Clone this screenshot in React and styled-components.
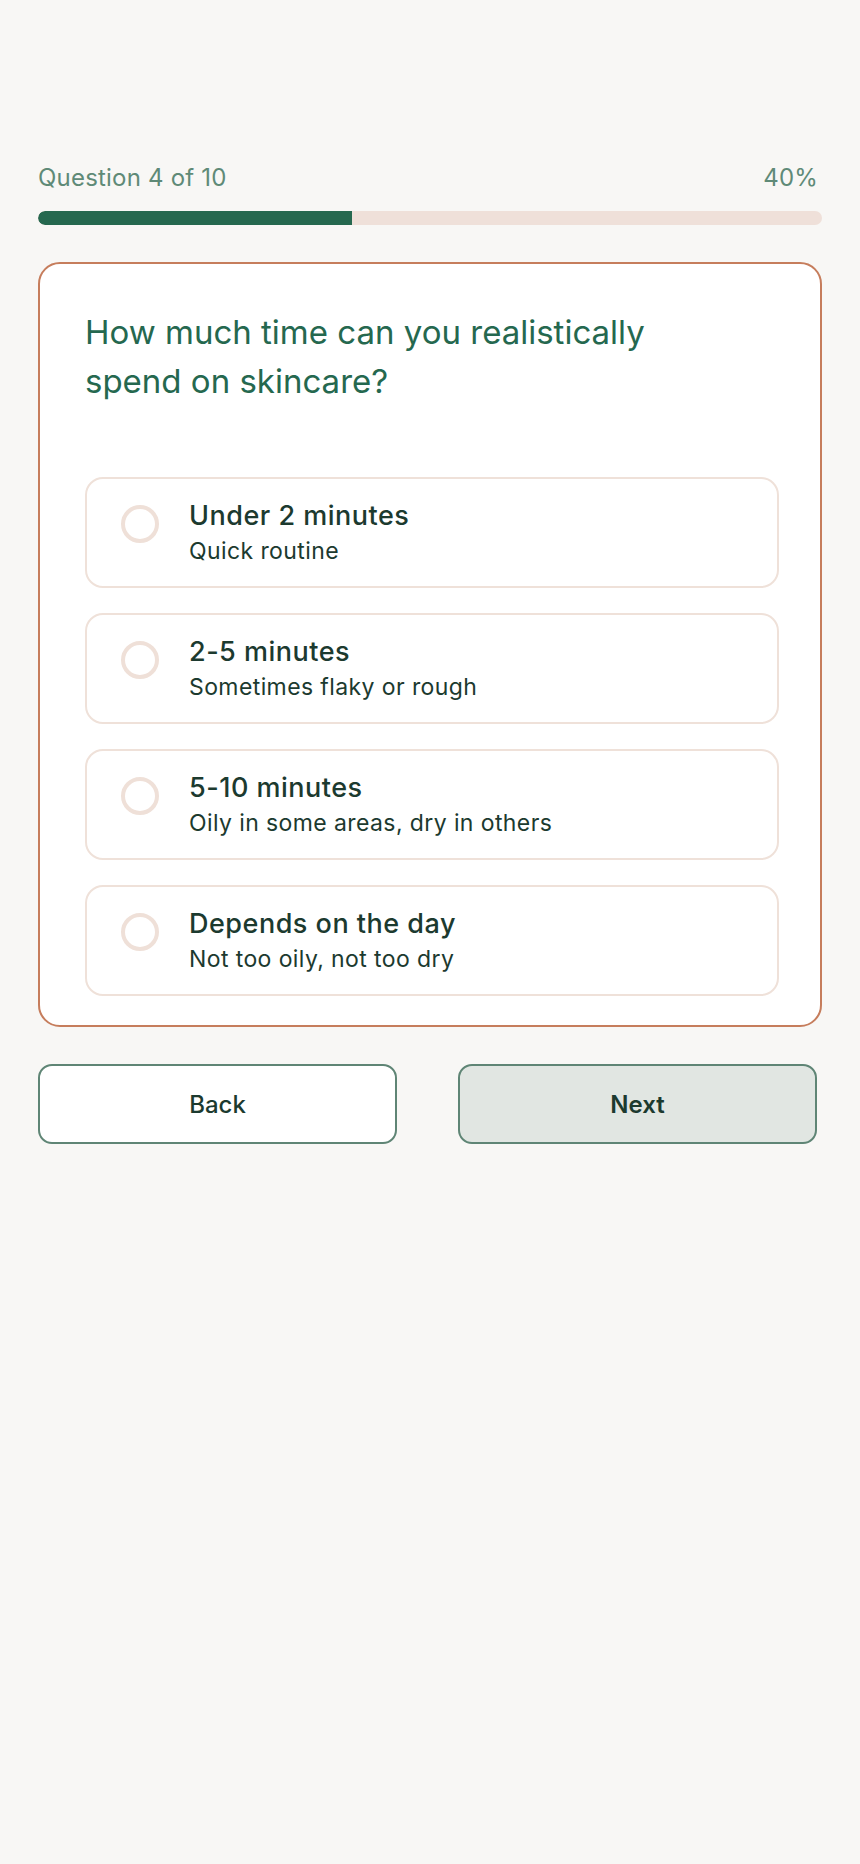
import React from "react";
import styled, { createGlobalStyle } from "styled-components";

const Global = createGlobalStyle`
  html, body { margin: 0; padding: 0; background: #f8f7f5; }
  body { font-family: Inter, "Noto Sans", "Liberation Sans", sans-serif; }
  * { box-sizing: border-box; }
`;

const Page = styled.div`
  min-height: 1864px;
  padding: 160px 38px 0 38px;
  background: #f8f7f5;
`;

const ProgressHeader = styled.div`
  display: flex;
  justify-content: space-between;
  align-items: center;
  padding-right: 4px;
  font-size: 24px;
  line-height: 36px;
  letter-spacing: 0.2px;
  color: #5f8a77;
  margin-bottom: 15px;
`;

const Track = styled.div`
  height: 14px;
  border-radius: 7px;
  background: #efe0d9;
  overflow: hidden;
  margin-bottom: 37px;
`;

const Fill = styled.div`
  height: 100%;
  background: #26684f;
  border-radius: 7px 0 0 7px;
`;

const Card = styled.div`
  background: #ffffff;
  border: 2px solid #c67d5c;
  border-radius: 22px;
  padding: 44px 41px 29px 45px;
  margin-bottom: 37px;
`;

const Question = styled.h2`
  margin: 0 0 71px 0;
  font-size: 33px;
  line-height: 49px;
  font-weight: 400;
  color: #25684f;
  max-width: 560px;
`;

const Options = styled.div`
  display: flex;
  flex-direction: column;
  gap: 25px;
`;

const Option = styled.div`
  display: flex;
  align-items: flex-start;
  gap: 30px;
  padding: 18px 34px;
  border: 2px solid #efe1d9;
  border-radius: 18px;
  background: #ffffff;
  cursor: pointer;
`;

const Radio = styled.span`
  flex: 0 0 38px;
  width: 38px;
  height: 38px;
  margin-top: 8px;
  border-radius: 50%;
  border: 4px solid #efe0d8;
  background: #ffffff;
`;

const OptionText = styled.div`
  display: flex;
  flex-direction: column;
  color: #1c3a2f;
`;

const OptionTitle = styled.div`
  font-size: 27px;
  line-height: 37px;
  font-weight: 500;
  letter-spacing: 0.5px;
`;

const OptionSub = styled.div`
  font-size: 23px;
  line-height: 34px;
  font-weight: 400;
  letter-spacing: 0.4px;
`;

const Actions = styled.div`
  display: grid;
  grid-template-columns: 1fr 1fr;
  gap: 61px;
  padding-right: 5px;
`;

const Button = styled.button`
  height: 80px;
  border: 2px solid #5f8575;
  border-radius: 14px;
  background: ${(p) => (p.$primary ? "#e1e6e2" : "#ffffff")};
  color: #1c3a2f;
  font-family: Inter, "Noto Sans", "Liberation Sans", sans-serif;
  font-size: 24px;
  font-weight: ${(p) => (p.$primary ? 600 : 500)};
  cursor: pointer;
`;

const options = [
  { title: "Under 2 minutes", sub: "Quick routine" },
  { title: "2-5 minutes", sub: "Sometimes flaky or rough" },
  { title: "5-10 minutes", sub: "Oily in some areas, dry in others" },
  { title: "Depends on the day", sub: "Not too oily, not too dry" },
];

export default function App() {
  const progress = 40;
  return (
    <>
      <Global />
      <Page>
        <ProgressHeader>
          <span>Question 4 of 10</span>
          <span>{progress}%</span>
        </ProgressHeader>
        <Track>
          <Fill style={{ width: `${progress}%` }} />
        </Track>
        <Card>
          <Question>How much time can you realistically spend on skincare?</Question>
          <Options>
            {options.map((o) => (
              <Option key={o.title}>
                <Radio />
                <OptionText>
                  <OptionTitle>{o.title}</OptionTitle>
                  <OptionSub>{o.sub}</OptionSub>
                </OptionText>
              </Option>
            ))}
          </Options>
        </Card>
        <Actions>
          <Button>Back</Button>
          <Button $primary>Next</Button>
        </Actions>
      </Page>
    </>
  );
}
